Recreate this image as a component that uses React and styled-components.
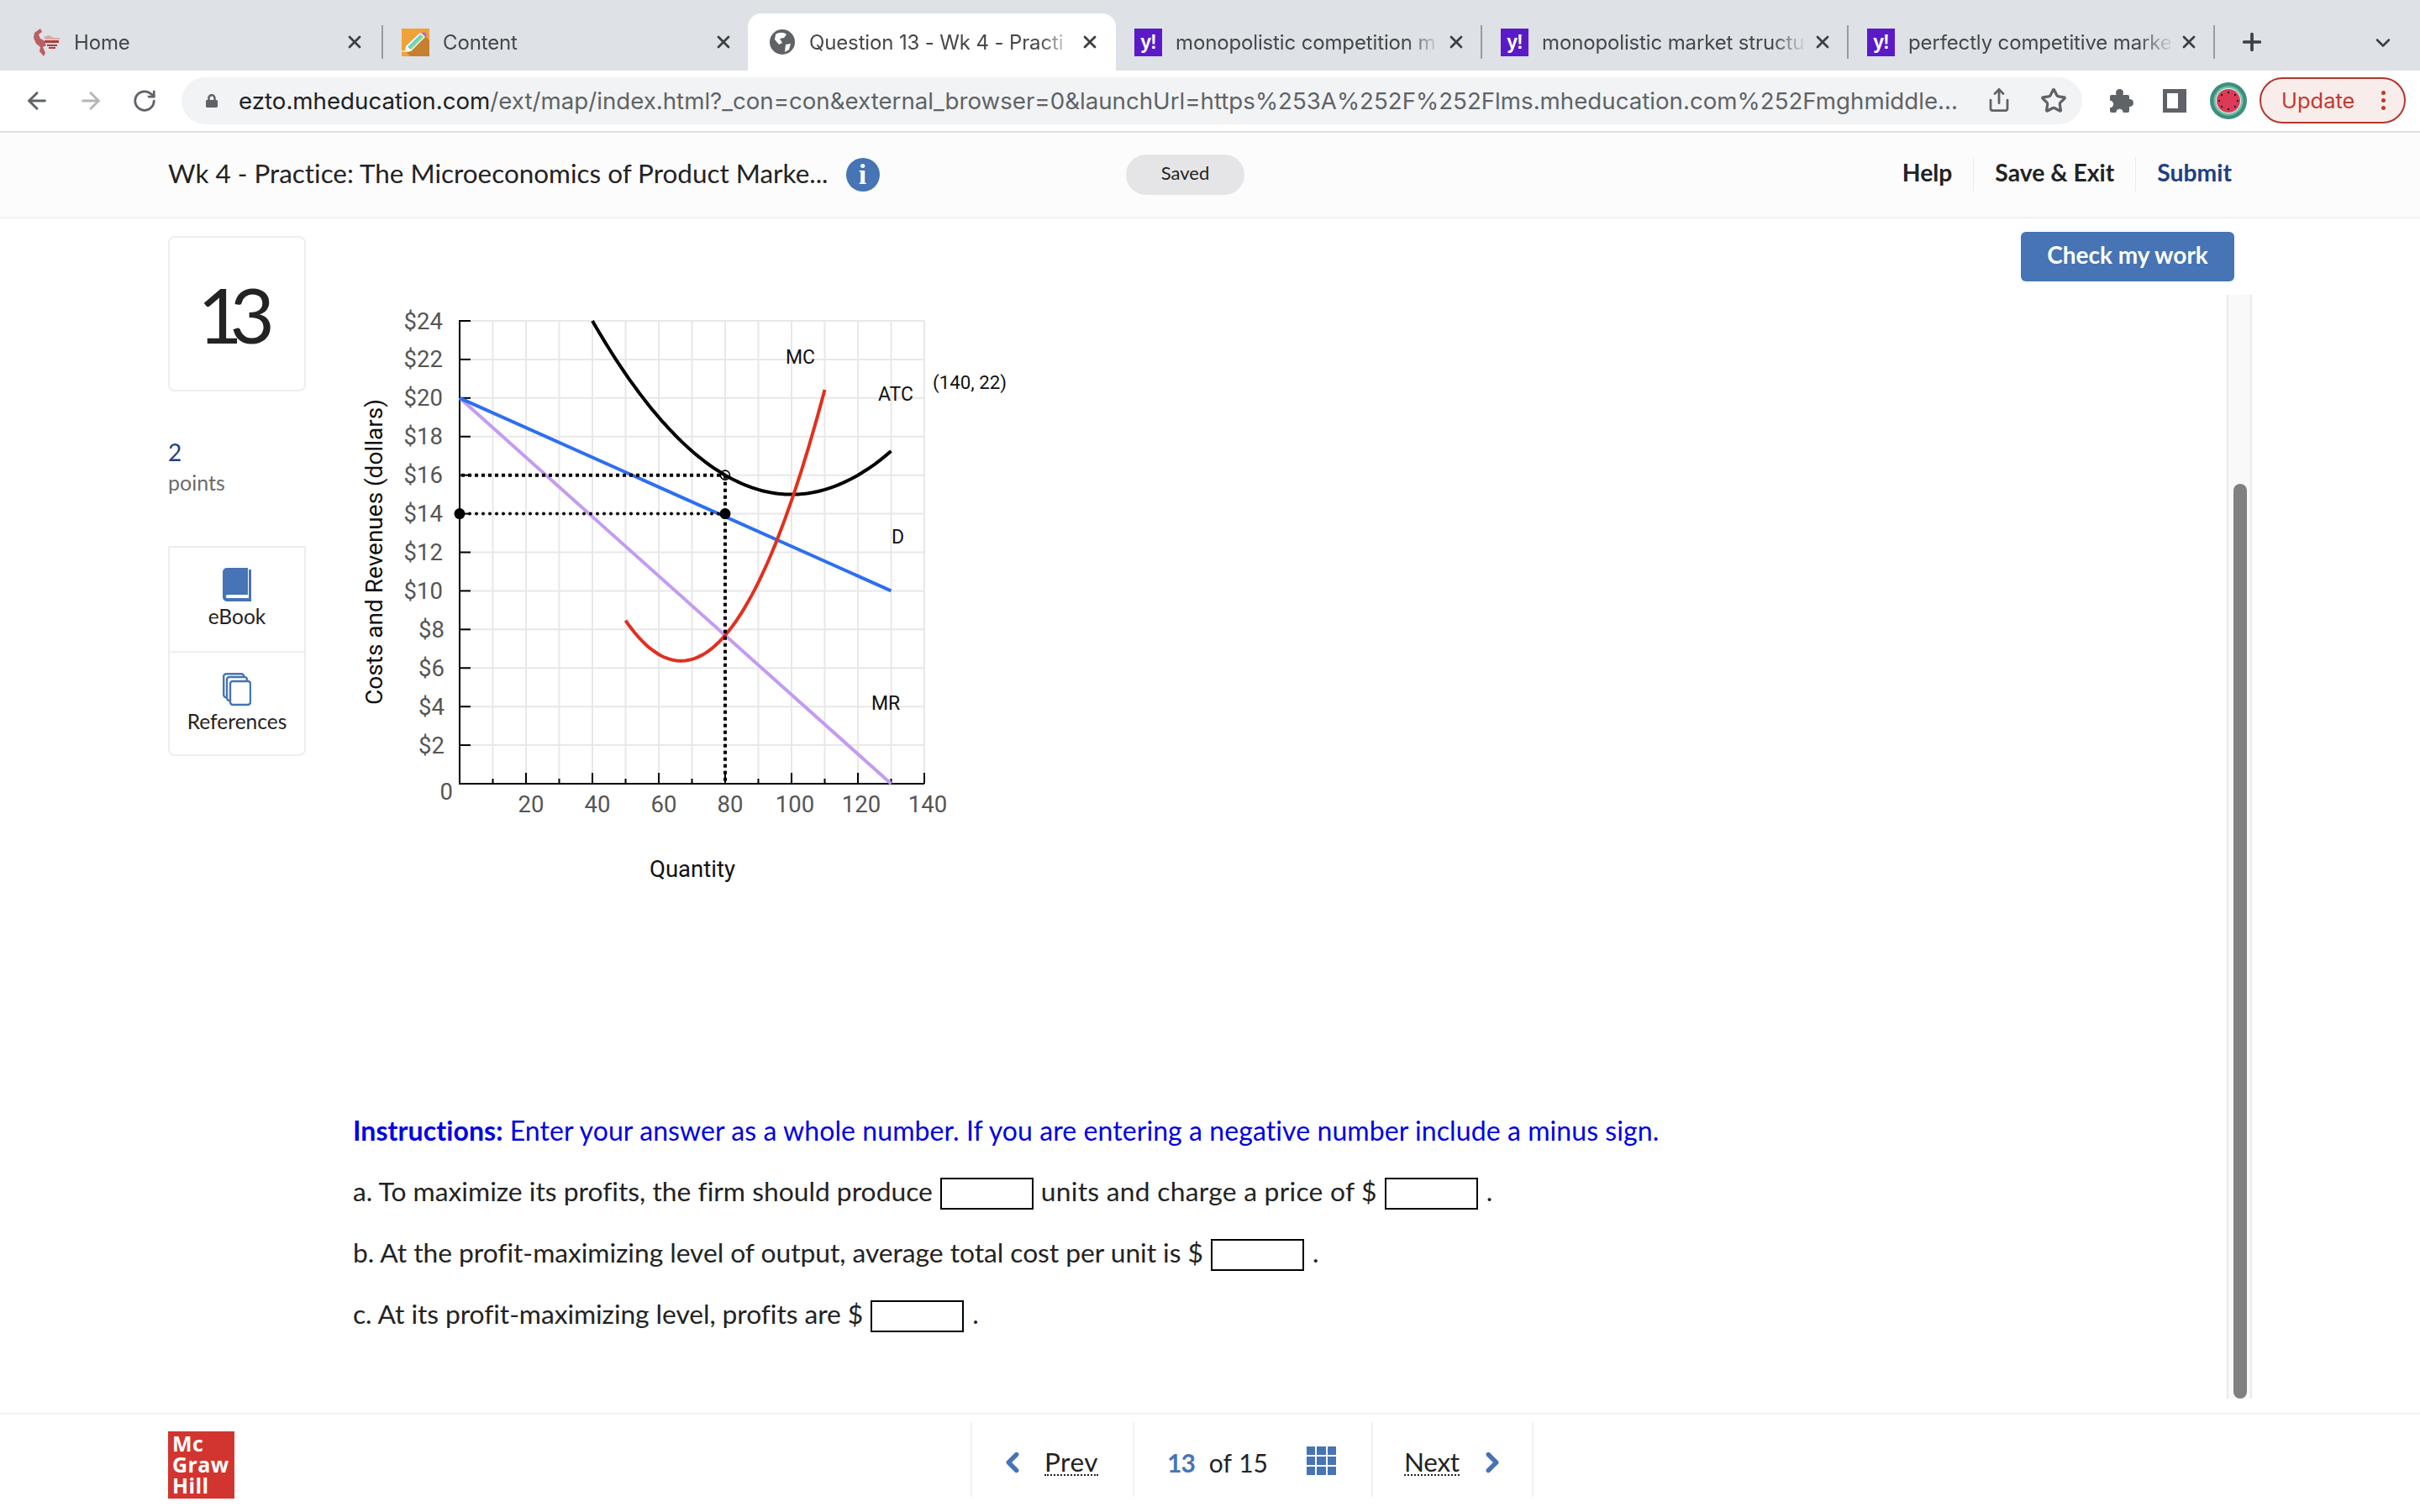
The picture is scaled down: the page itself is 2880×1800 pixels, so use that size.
import React from "react";
import styled, { createGlobalStyle } from "styled-components";
import { ArrowLeft, ArrowRight, RotateCw, Share, Star, X, Plus, ChevronDown, ChevronLeft, ChevronRight } from "lucide-react";
import { FaLock } from "react-icons/fa";

const GlobalStyle = createGlobalStyle`
  html, body { margin: 0; padding: 0; background: #fff; }
  body { font-family: "Lato", "Open Sans", sans-serif; color: #232323; font-variant-ligatures: none; }
`;

const Page = styled.div`
  width: 2880px;
  height: 1800px;
  display: flex;
  flex-direction: column;
  overflow: hidden;
`;

/* browser chrome */
const TabStrip = styled.div`
  height: 84px;
  background: #dee1e6;
  display: flex;
  align-items: flex-end;
  padding-left: 17px;
  box-sizing: border-box;
`;
const Tab = styled.div`
  width: ${(p) => (p.$active ? "438px" : p.$first ? "439px" : "436px")};
  height: 68px;
  margin-left: ${(p) => (p.$active ? "-2px" : "0")};
  padding-left: ${(p) => (p.$active ? "24px" : "22px")};
  box-sizing: border-box;
  display: flex;
  align-items: center;
  background: ${(p) => (p.$active ? "#fff" : "transparent")};
  border-radius: 16px 16px 0 0;
`;
const TabIcon = styled.div`
  width: 33px;
  height: 33px;
  flex: none;
  display: flex;
  align-items: center;
  justify-content: center;
`;
const YahooIcon = styled(TabIcon)`
  background: #5a1ac8;
  color: #fff;
  font: 700 23px "Liberation Sans", sans-serif;
  letter-spacing: -1px;
`;
const TabTitle = styled.div`
  width: 312px;
  margin-left: 16px;
  flex: none;
  font: 400 24px "Inter", sans-serif;
  letter-spacing: -0.14px;
  color: #45474a;
  white-space: nowrap;
  overflow: hidden;
  mask-image: linear-gradient(to right, #000 88%, rgba(0, 0, 0, 0.15) 99%);
`;
const TabClose = styled(X)`
  width: 24px;
  height: 24px;
  margin-left: 10px;
  flex: none;
  color: #3c4043;
  stroke-width: 2.8;
`;
const TabSep = styled.div`
  width: 2px;
  height: 40px;
  margin-left: auto;
  background: ${(p) => (p.$show ? "#9a9ca0" : "transparent")};
`;
const NewTab = styled(Plus)`
  width: 32px;
  height: 32px;
  margin: 0 0 18px 28px;
  color: #3c4043;
  stroke-width: 2.8;
`;
const TabMenu = styled(ChevronDown)`
  width: 28px;
  height: 28px;
  margin: 0 0 19px 126px;
  color: #3c4043;
  stroke-width: 2.2;
`;

const Toolbar = styled.div`
  height: 74px;
  box-sizing: border-box;
  padding: 8px 0 8px 12px;
  display: flex;
  align-items: flex-start;
  background: #fff;
  border-bottom: 2px solid #dedede;
`;
const ToolButton = styled.div`
  width: 64px;
  height: 56px;
  flex: none;
  display: flex;
  align-items: center;
  justify-content: center;
  color: ${(p) => p.$color || "#5f6368"};
`;
const AddressBar = styled.div`
  width: 2262px;
  height: 56px;
  margin: 0 14px 0 12px;
  padding-left: 28px;
  box-sizing: border-box;
  display: flex;
  align-items: center;
  background: #f1f3f4;
  border-radius: 28px;
  flex: none;
`;
const Url = styled.div`
  width: 2060px;
  margin-left: 24px;
  flex: none;
  font: 400 27.68px "Inter", sans-serif;
  color: #5f6368;
  white-space: nowrap;
  b { font-weight: 400; color: #202124; }
`;
const BarActions = styled.div`
  display: flex;
  margin-left: auto;
  margin-right: 2px;
`;
const BarIcon = styled.div`
  width: 65px;
  display: flex;
  justify-content: center;
  color: #5f6368;
`;
const UpdatePill = styled.div`
  width: 174px;
  height: 55px;
  margin-left: 5px;
  padding: 0 22px 0 24px;
  box-sizing: border-box;
  flex: none;
  display: flex;
  align-items: center;
  justify-content: space-between;
  background: #f8edeb;
  border: 2px solid #b3362c;
  border-radius: 28px;
  color: #c5392f;
  font: 400 25.5px "Inter", sans-serif;
`;
const UpdateDots = styled.div`
  width: 5px;
  height: 5px;
  border-radius: 50%;
  background: #c5392f;
  box-shadow: 0 -9px 0 #c5392f, 0 9px 0 #c5392f;
`;

/* assignment header */
const AssignmentBar = styled.div`
  height: 102px;
  box-sizing: border-box;
  padding: 0 224px 0 200px;
  display: flex;
  align-items: center;
  background: #fcfcfc;
  border-bottom: 2px solid #f1f1f1;
`;
const TitleGroup = styled.div`
  width: 1140px;
  display: flex;
  align-items: center;
  flex: none;
`;
const AssignmentTitle = styled.div`
  font-size: 31.45px;
  line-height: 40px;
  margin-top: -5px;
  color: #232323;
  white-space: nowrap;
`;
const InfoBadge = styled.div`
  width: 40px;
  height: 40px;
  margin-left: 21px;
  border-radius: 50%;
  background: #4674b4;
  color: #fff;
  font: 700 34px "Liberation Serif", serif;
  display: flex;
  align-items: center;
  justify-content: center;
`;
const SavedPill = styled.div`
  width: 141px;
  height: 48px;
  padding-bottom: 6px;
  box-sizing: border-box;
  border-radius: 24px;
  background: #e5e5e7;
  font-size: 22px;
  display: flex;
  align-items: center;
  justify-content: center;
`;
const HeaderLinks = styled.div`
  margin-left: auto;
  display: flex;
`;
const HeaderLink = styled.div`
  height: 40px;
  padding: 0 ${(p) => (p.$last ? "0" : "25px")} 6px ${(p) => (p.$first ? "0" : "25px")};
  box-sizing: border-box;
  border-left: ${(p) => (p.$first ? "none" : "1px solid #ececec")};
  display: flex;
  align-items: center;
  font-size: 28.3px;
  font-weight: 700;
  color: ${(p) => p.$color || "#232323"};
`;

/* body */
const Body = styled.div`
  flex: 1;
  min-height: 0;
  padding-left: 200px;
  display: flex;
`;
const Sidebar = styled.div`
  width: 164px;
  flex: none;
  padding-top: 21px;
  display: flex;
  flex-direction: column;
`;
const NumberCard = styled.div`
  height: 185px;
  box-sizing: border-box;
  border: 2px solid #eeeeee;
  border-radius: 8px;
  display: flex;
  align-items: center;
  justify-content: center;
  font-size: 92px;
  letter-spacing: -15px;
  padding-right: 17px;
  color: #232323;
`;
const Points = styled.div`
  margin-top: 55px;
  font-size: 28px;
  line-height: 34px;
  color: #1f4082;
`;
const PointsLabel = styled.div`
  margin-top: 3px;
  font-size: 25px;
  line-height: 32px;
  color: #6b6b6b;
`;
const ToolBox = styled.div`
  margin-top: 60px;
  border: 2px solid #eeeeee;
  border-radius: 0 0 8px 8px;
`;
const ToolItem = styled.div`
  height: 123px;
  box-sizing: border-box;
  padding-top: 24px;
  display: flex;
  flex-direction: column;
  align-items: center;
  gap: 3px;
  font-size: 24.5px;
  color: #232323;
  & + & { border-top: 2px solid #eeeeee; }
`;
const Main = styled.div`
  width: 1985px;
  margin-left: 56px;
  flex: none;
  display: flex;
  flex-direction: column;
`;
const Chart = styled.svg`
  width: 800px;
  height: 780px;
  margin-top: 80px;
  flex: none;
`;
const Instructions = styled.div`
  margin-top: 206px;
  height: 40px;
  line-height: 40px;
  font-size: 32px;
  letter-spacing: 0.08px;
  color: #0000e6;
  white-space: nowrap;
  b { font-weight: 700; }
`;
const QuestionList = styled.div`
  margin-top: 36px;
  display: flex;
  flex-direction: column;
  gap: 35px;
`;
const Question = styled.div`
  height: 38px;
  display: flex;
  align-items: center;
  gap: 9px;
  font-size: 31.8px;
  color: #232323;
  white-space: nowrap;
`;
const QuestionText = styled.div`
  margin-top: -6px;
  margin-left: ${(p) => p.$ml || 0}px;
  letter-spacing: ${(p) => p.$ls || 0}px;
`;
const AnswerBox = styled.div`
  width: 111px;
  height: 38px;
  box-sizing: border-box;
  border: 2px solid #000;
  background: #fff;
  flex: none;
`;
const Rail = styled.div`
  width: 275px;
  flex: none;
  padding: 16px 0 17px;
  box-sizing: border-box;
  display: flex;
  flex-direction: column;
`;
const CheckButton = styled.div`
  width: 254px;
  height: 59px;
  padding-bottom: 5px;
  box-sizing: border-box;
  border-radius: 6px;
  background: #4674b4;
  color: #fff;
  font-size: 28px;
  font-weight: 700;
  display: flex;
  align-items: center;
  justify-content: center;
`;
const ScrollTrack = styled.div`
  width: 30px;
  flex: 1;
  margin: 16px 0 0 auto;
  padding-top: 225px;
  box-sizing: border-box;
  background: #f9f9f9;
  border: solid #e9e9e9;
  border-width: 0 2px;
  display: flex;
`;
const ScrollThumb = styled.div`
  width: 16px;
  margin-left: 6px;
  border-radius: 8px;
  background: #808080;
`;

/* footer */
const Footer = styled.div`
  height: 118px;
  box-sizing: border-box;
  padding-left: 200px;
  border-top: 2px solid #f1f1f1;
  display: flex;
  align-items: flex-start;
`;
const Logo = styled.div`
  width: 79px;
  height: 80px;
  margin-top: 20px;
  padding: 2px 0 0 5px;
  box-sizing: border-box;
  background: #d2352f;
  color: #fff;
  font: 700 25px/25px "Open Sans", sans-serif;
  letter-spacing: 0.4px;
  flex: none;
`;
const Pager = styled.div`
  display: flex;
  margin: 9px 0 0 876px;
`;
const PagerCell = styled.div`
  width: ${(p) => p.$w}px;
  height: 89px;
  box-sizing: border-box;
  border-left: 2px solid #f1f1f1;
  border-right: ${(p) => (p.$last ? "2px solid #f1f1f1" : "none")};
  padding: 6px 0 0 ${(p) => p.$pad}px;
  display: flex;
  align-items: center;
  font-size: ${(p) => p.$size || 31.5}px;
  color: #232323;
`;
const PagerLink = styled.div`
  line-height: 30px;
  margin-left: ${(p) => p.$ml || 0}px;
  letter-spacing: ${(p) => p.$ls || 0}px;
  border-bottom: 2px dotted #232323;
`;
const PagerChevron = styled.div`
  color: #4674b4;
  display: flex;
  margin-left: ${(p) => p.$ml || 0}px;
`;
const CurrentNumber = styled.b`
  color: #4674b4;
  font-weight: 700;
  letter-spacing: -1px;
`;
const OfText = styled.span`
  margin-left: 17px;
  word-spacing: 1px;
`;
const GridIcon = styled.div`
  width: 35px;
  height: 35px;
  margin: -3px 0 0 46px;
  display: grid;
  grid-template-columns: repeat(3, 1fr);
  grid-template-rows: repeat(3, 1fr);
  gap: 2px;
  i { background: #4674b4; }
`;

const HomeBird = () => (
  <svg width="33" height="33" viewBox="0 0 33 33">
    <path d="M9 0l2 4-4 3 2 5 4 2 3 6-4 2 3 7-2 4-5-6 1-5-5-4-3-7 1-6z" fill="#b5464a" opacity="0.85" />
    <path d="M13 10l6-2 6 3h7v2H15z" fill="#d9a9a8" />
    <path d="M14 14h17v3H14zM17 19h12v2H17zM19 22h8v2h-8z" fill="#b33a3a" />
  </svg>
);
const ContentIcon = () => (
  <svg width="33" height="33" viewBox="0 0 33 33">
    <rect width="33" height="33" fill="#efa23a" />
    <path d="M27 8L33 14V33H10L5 27z" fill="#c67f2e" />
    <path d="M22 5l6 5-17 17-7 1 1-7z" fill="#fff" />
    <path d="M22 7l4 3-15 15-4-3z" fill="#62cfd8" />
    <path d="M24 8.5l2 1.5-15 15-2-1.5z" fill="#8ed98a" />
    <path d="M24 5l3-1 3 3-1 3z" fill="#a86ad8" />
    <path d="M0 27h8" stroke="#fbe7b0" strokeWidth="1.6" />
  </svg>
);
const GlobeIcon = () => (
  <svg width="30" height="30" viewBox="0 0 30 30">
    <circle cx="15" cy="15" r="15" fill="#5f6368" />
    <path d="M7 6c4-3 10-3 13 0l-3 4-5 1 3 5-4 2-5-6zM19 18l6-1-2 7-5 3z" fill="#fff" />
  </svg>
);
const Watermelon = () => (
  <svg width="44" height="44" viewBox="0 0 44 44">
    <circle cx="22" cy="22" r="22" fill="#3e8e7e" />
    <circle cx="22" cy="22" r="17.5" fill="#6fc5a8" />
    <circle cx="22" cy="22" r="15" fill="#f2f2f2" />
    <circle cx="22" cy="22" r="14" fill="#dc3a58" />
    {[[22, 12], [14, 15], [30, 15], [11, 22], [33, 22], [14, 29], [30, 29], [22, 32]].map(([x, y]) => (
      <circle key={x + "-" + y} cx={x} cy={y} r="1.2" fill="#222" />
    ))}
  </svg>
);
const SidePanel = () => (
  <svg width="28" height="28" viewBox="0 0 28 28">
    <path d="M0 0h28v28H0z" fill="#5f6368" />
    <path d="M5 5h13v18H5z" fill="#fff" />
  </svg>
);
const PuzzleIcon = () => (
  <svg width="30" height="30" viewBox="0 0 30 30" fill="#5f6368">
    <rect x="2" y="8" width="23" height="21" rx="2" />
    <circle cx="13.5" cy="5.5" r="4.5" />
    <circle cx="25.5" cy="17.5" r="4.5" />
    <circle cx="13.5" cy="29" r="4.2" fill="#fff" />
    <circle cx="2" cy="19" r="4.2" fill="#fff" />
  </svg>
);
const BookIcon = () => (
  <svg width="34" height="40" viewBox="0 0 34 40">
    <path d="M5 0h25v32H6a6 6 0 0 0-2 1 2 2 0 0 0 2 3h25V2h3v38H5a5 5 0 0 1-5-5V5a5 5 0 0 1 5-5z" fill="#4674b4" />
  </svg>
);
const RefsIcon = () => (
  <svg width="34" height="40" viewBox="0 0 34 40" fill="#fff" stroke="#4674b4" strokeWidth="2.4">
    <rect x="1.2" y="1.2" width="24" height="28" rx="3" />
    <rect x="5" y="5" width="24" height="28" rx="3" />
    <rect x="9" y="10" width="24" height="28" rx="3" />
  </svg>
);

// chart scale, data units to svg pixels
const plot = { left: 127, right: 680, top: 42, bottom: 593 };
const sx = (q) => plot.left + (q * (plot.right - plot.left)) / 140;
const sy = (v) => plot.bottom - (v * (plot.bottom - plot.top)) / 24;
const curve = (fn, from, to) => {
  const pts = [];
  for (let q = from; q <= to; q += 1) pts.push(sx(q).toFixed(1) + "," + sy(fn(q)).toFixed(1));
  return pts.join(" ");
};
const atc = (q) => 15 + 0.0025 * (q - 100) * (q - 100);
const mc = (q) => 6.37 + 0.0075 * (q - 66.7) * (q - 66.7);
const steps = (n, step) => Array.from({ length: n }, (_, i) => (i + 1) * step);

const ChartDrawing = () => (
  <Chart viewBox="0 0 800 780">
    <g stroke="#e8e8e8" strokeWidth="2">
      {steps(14, 10).map((q) => <line key={q} x1={sx(q)} x2={sx(q)} y1={plot.top} y2={plot.bottom} />)}
      {steps(12, 2).map((v) => <line key={v} x1={plot.left} x2={plot.right} y1={sy(v)} y2={sy(v)} />)}
    </g>
    <g stroke="#000" strokeWidth="2">
      <line x1={plot.left} x2={plot.left} y1={plot.top - 1} y2={plot.bottom + 1} />
      <line x1={plot.left} x2={plot.right} y1={plot.bottom} y2={plot.bottom} />
      {steps(12, 2).map((v) => <line key={v} x1={plot.left} x2={plot.left + 13} y1={sy(v)} y2={sy(v)} />)}
      {steps(14, 10).map((q) => (
        <line key={q} x1={sx(q)} x2={sx(q)} y1={plot.bottom} y2={plot.bottom - (q % 20 === 0 ? 13 : 6)} />
      ))}
    </g>
    <polyline points={`${sx(0)},${sy(20)} ${sx(130)},${sy(0)}`} stroke="#c49bf2" strokeWidth="4" fill="none" />
    <polyline points={`${sx(0)},${sy(20)} ${sx(130)},${sy(10)}`} stroke="#2e6ef2" strokeWidth="4" fill="none" />
    <polyline points={curve(atc, 40, 130)} stroke="#000" strokeWidth="4" fill="none" />
    <polyline points={curve(mc, 50, 110)} stroke="#e1301f" strokeWidth="4" fill="none" />
    <line x1={sx(0) + 2} x2={sx(80)} y1={sy(16)} y2={sy(16)} stroke="#000" strokeWidth="4" strokeDasharray="4 4" />
    <line x1={sx(0) + 4} x2={sx(80)} y1={sy(14)} y2={sy(14)} stroke="#000" strokeWidth="4" strokeDasharray="0 8" strokeLinecap="round" />
    <line x1={sx(80)} x2={sx(80)} y1={sy(16)} y2={sy(0)} stroke="#000" strokeWidth="4" strokeDasharray="4 4" />
    <circle cx={sx(80)} cy={sy(16)} r="5.5" fill="none" stroke="#000" strokeWidth="1.6" />
    <circle cx={sx(80)} cy={sy(14)} r="6.5" fill="#000" />
    <circle cx={sx(0)} cy={sy(14)} r="6.5" fill="#000" />
    <g fontFamily="Roboto, sans-serif" fontSize="27.5" fill="#555" dominantBaseline="central" textAnchor="end">
      {steps(12, 2).map((v) => <text key={v} x={v < 10 ? 109 : 107} y={sy(v)}>${v}</text>)}
      <text x="119" y="602">0</text>
    </g>
    <g fontFamily="Roboto, sans-serif" fontSize="27.5" fill="#555" dominantBaseline="central" textAnchor="middle">
      {steps(7, 20).map((q) => <text key={q} x={sx(q) + (q >= 100 ? 4 : 6)} y="617">{q}</text>)}
    </g>
    <g fontFamily="Roboto, sans-serif" fontSize="23" fill="#111" dominantBaseline="central">
      <text x="515" y="85.5">MC</text>
      <text x="625" y="129">ATC</text>
      <text x="690" y="115" fontSize="22.3">(140, 22)</text>
      <text x="641" y="299">D</text>
      <text x="617" y="497">MR</text>
    </g>
    <text x="25" y="317" fontFamily="Roboto, sans-serif" fontSize="28" fill="#111" textAnchor="middle" dominantBaseline="central" transform="rotate(-90 25 317)">
      Costs and Revenues (dollars)
    </text>
    <text x="404" y="694" fontFamily="Roboto, sans-serif" fontSize="27.5" fill="#111" textAnchor="middle" dominantBaseline="central">
      Quantity
    </text>
  </Chart>
);

const tabs = [
  { icon: <HomeBird />, title: "Home", sep: true, first: true },
  { icon: <ContentIcon />, title: "Content" },
  { icon: <GlobeIcon />, title: "Question 13 - Wk 4 - Practi", active: true },
  { yahoo: true, title: "monopolistic competition m", sep: true },
  { yahoo: true, title: "monopolistic market structu", sep: true },
  { yahoo: true, title: "perfectly competitive marke", sep: true },
];

export default function App() {
  return (
    <Page>
      <GlobalStyle />
      <TabStrip>
        {tabs.map((t) => (
          <Tab key={t.title} $active={t.active} $first={t.first}>
            {t.yahoo ? <YahooIcon>y!</YahooIcon> : <TabIcon>{t.icon}</TabIcon>}
            <TabTitle>{t.title}</TabTitle>
            <TabClose />
            <TabSep $show={t.sep} />
          </Tab>
        ))}
        <NewTab />
        <TabMenu />
      </TabStrip>
      <Toolbar>
        <ToolButton><ArrowLeft size={32} strokeWidth={2.2} /></ToolButton>
        <ToolButton $color="#b4b6b9"><ArrowRight size={32} strokeWidth={2.2} /></ToolButton>
        <ToolButton><RotateCw size={30} strokeWidth={2.2} /></ToolButton>
        <AddressBar>
          <FaLock size={16} color="#5f6368" />
          <Url>
            <b>ezto.mheducation.com</b>/ext/map/index.html?_con=con&external_browser=0&launchUrl=https%253A%252F%252Flms.mheducation.com%252Fmghmiddle...
          </Url>
          <BarActions>
            <BarIcon><Share size={30} strokeWidth={2.2} /></BarIcon>
            <BarIcon><Star size={32} strokeWidth={2.4} /></BarIcon>
          </BarActions>
        </AddressBar>
        <ToolButton><PuzzleIcon /></ToolButton>
        <ToolButton><SidePanel /></ToolButton>
        <ToolButton><Watermelon /></ToolButton>
        <UpdatePill>Update<UpdateDots /></UpdatePill>
      </Toolbar>
      <AssignmentBar>
        <TitleGroup>
          <AssignmentTitle>Wk 4 - Practice: The Microeconomics of Product Marke...</AssignmentTitle>
          <InfoBadge>i</InfoBadge>
        </TitleGroup>
        <SavedPill>Saved</SavedPill>
        <HeaderLinks>
          <HeaderLink $first>Help</HeaderLink>
          <HeaderLink>Save &amp; Exit</HeaderLink>
          <HeaderLink $last $color="#1f4082">Submit</HeaderLink>
        </HeaderLinks>
      </AssignmentBar>
      <Body>
        <Sidebar>
          <NumberCard>13</NumberCard>
          <Points>2</Points>
          <PointsLabel>points</PointsLabel>
          <ToolBox>
            <ToolItem><BookIcon />eBook</ToolItem>
            <ToolItem><RefsIcon />References</ToolItem>
          </ToolBox>
        </Sidebar>
        <Main>
          <ChartDrawing />
          <Instructions>
            <b>Instructions:</b> Enter your answer as a whole number. If you are entering a negative number include a minus sign.
          </Instructions>
          <QuestionList>
            <Question>
              <QuestionText>a. To maximize its profits, the firm should produce</QuestionText>
              <AnswerBox />
              <QuestionText $ls={0.25}>units and charge a price of $</QuestionText>
              <AnswerBox />
              <QuestionText $ml={1}>.</QuestionText>
            </Question>
            <Question>
              <QuestionText $ls={-0.05}>b. At the profit-maximizing level of output, average total cost per unit is $</QuestionText>
              <AnswerBox />
              <QuestionText $ml={1}>.</QuestionText>
            </Question>
            <Question>
              <QuestionText $ls={-0.08}>c. At its profit-maximizing level, profits are $</QuestionText>
              <AnswerBox />
              <QuestionText $ml={1}>.</QuestionText>
            </Question>
          </QuestionList>
        </Main>
        <Rail>
          <CheckButton>Check my work</CheckButton>
          <ScrollTrack><ScrollThumb /></ScrollTrack>
        </Rail>
      </Body>
      <Footer>
        <Logo>Mc<br />Graw<br />Hill</Logo>
        <Pager>
          <PagerCell $w={193} $pad={29}>
            <PagerChevron><ChevronLeft size={38} strokeWidth={3.4} /></PagerChevron>
            <PagerLink $ml={19} $ls={0.5}>Prev</PagerLink>
          </PagerCell>
          <PagerCell $w={284} $pad={39} $size={30}>
            <CurrentNumber>13</CurrentNumber>
            <OfText>of 15</OfText>
            <GridIcon>{Array.from({ length: 9 }, (_, i) => <i key={i} />)}</GridIcon>
          </PagerCell>
          <PagerCell $w={193} $pad={37} $last>
            <PagerLink $ls={-0.3}>Next</PagerLink>
            <PagerChevron $ml={20}><ChevronRight size={38} strokeWidth={3.4} /></PagerChevron>
          </PagerCell>
        </Pager>
      </Footer>
    </Page>
  );
}
